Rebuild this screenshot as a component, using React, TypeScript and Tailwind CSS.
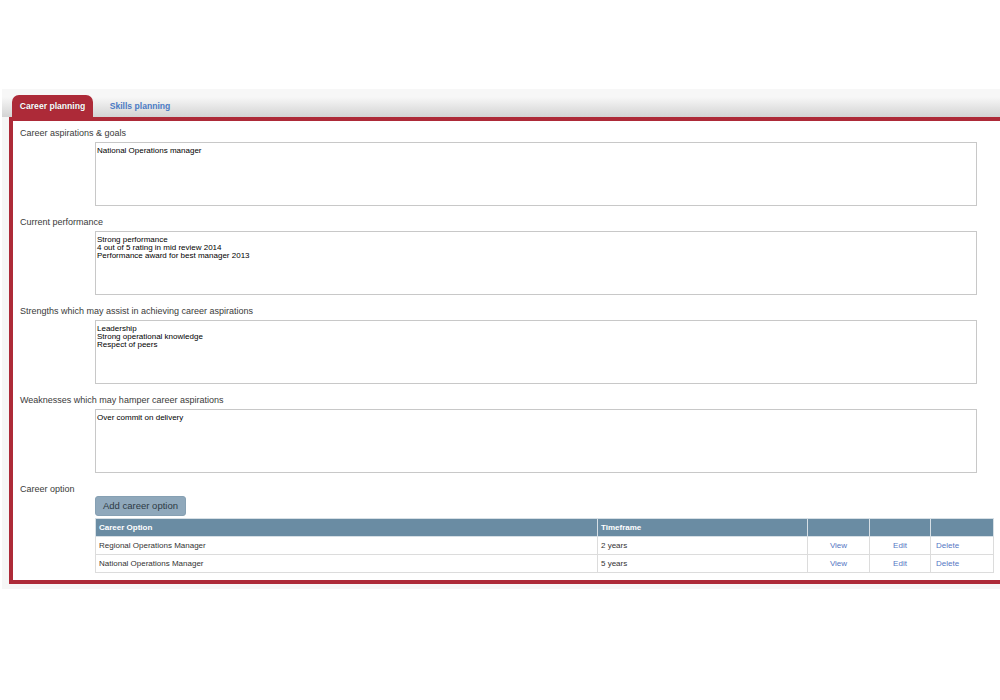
import React from "react";

const sections = [
  { label: "Career aspirations & goals", text: "National Operations manager" },
  {
    label: "Current performance",
    text: "Strong performance\n4 out of 5 rating in mid review 2014\nPerformance award for best manager 2013",
  },
  {
    label: "Strengths which may assist in achieving career aspirations",
    text: "Leadership\nStrong operational knowledge\nRespect of peers",
  },
  { label: "Weaknesses which may hamper career aspirations", text: "Over commit on delivery" },
];

const rows = [
  { option: "Regional Operations Manager", time: "2 years" },
  { option: "National Operations Manager", time: "5 years" },
];

export default function App() {
  return (
    <div className="w-full h-[700px] bg-white overflow-hidden pt-[89px]" style={{ fontFamily: '"Liberation Sans", Arial, sans-serif' }}>
      <div className="ml-[2px] bg-[#f6f6f6] pb-[5px]">
        <div className="h-[28px] pt-[6px] pl-[10px] flex items-end bg-[linear-gradient(to_bottom,#f7f7f7_0%,#f7f7f7_28%,#efefef_45%,#d3d3d3_100%)]">
          <div className="w-[81px] h-[22px] rounded-t-[7px] bg-[#ad2a38] text-white font-bold text-[8.6px] flex items-center justify-center [text-shadow:0_0_1px_rgba(0,0,0,0.4)]">
            Career planning
          </div>
          <div className="h-[22px] w-[94px] text-[#4b7bc4] font-bold text-[8.6px] flex items-center justify-center">
            Skills planning
          </div>
        </div>
        <div className="ml-[7px] border-t-[4px] border-l-[4px] border-b-[4px] border-[#ad2a38] bg-white pt-[6px] pb-[7px]">
          {sections.map((s) => (
            <div key={s.label} className="mb-[10px]">
              <div className="h-[12px] leading-[12px] text-[9px] text-[#3a3a3a] pl-[7px]">{s.label}</div>
              <textarea
                readOnly
                defaultValue={s.text}
                className="block mt-[3px] ml-[82px] w-[882px] h-[64px] resize-none border border-[#c8c8c8] bg-white text-black text-[8px] leading-[8px] px-[1px] pt-[4px] outline-none"
              />
            </div>
          ))}
          <div>
            <div className="h-[12px] leading-[12px] text-[9px] text-[#3a3a3a] pl-[7px]">Career option</div>
            <div className="ml-[82px] mt-[1px]">
              <button className="h-[20px] w-[91px] rounded-[3px] bg-[#8fa8bb] border border-[#86a0b3] text-[#2d3a44] text-[9.5px] flex items-center justify-center">
                Add career option
              </button>
              <table className="mt-[2px] w-[898px] border-collapse text-[8px] table-fixed">
                <colgroup>
                  <col className="w-[502px]" />
                  <col className="w-[210px]" />
                  <col className="w-[62px]" />
                  <col className="w-[61px]" />
                  <col className="w-[63px]" />
                </colgroup>
                <thead>
                  <tr className="h-[18px] bg-[#6a8ca3] text-white font-bold text-left">
                    <th className="border border-[#d6dfe5] px-[3px] font-bold">Career Option</th>
                    <th className="border border-[#d6dfe5] px-[3px] font-bold">Timeframe</th>
                    <th className="border border-[#d6dfe5]"></th>
                    <th className="border border-[#d6dfe5]"></th>
                    <th className="border border-[#d6dfe5]"></th>
                  </tr>
                </thead>
                <tbody>
                  {rows.map((r) => (
                    <tr key={r.option} className="h-[18px] text-[#333]">
                      <td className="border border-[#dcdcdc] px-[3px]">{r.option}</td>
                      <td className="border border-[#dcdcdc] px-[3px]">{r.time}</td>
                      <td className="border border-[#dcdcdc] text-center text-[#5577c4]">View</td>
                      <td className="border border-[#dcdcdc] text-center text-[#5577c4]">Edit</td>
                      <td className="border border-[#dcdcdc] pl-[5px] text-[#5577c4]">Delete</td>
                    </tr>
                  ))}
                </tbody>
              </table>
            </div>
          </div>
        </div>
      </div>
    </div>
  );
}
